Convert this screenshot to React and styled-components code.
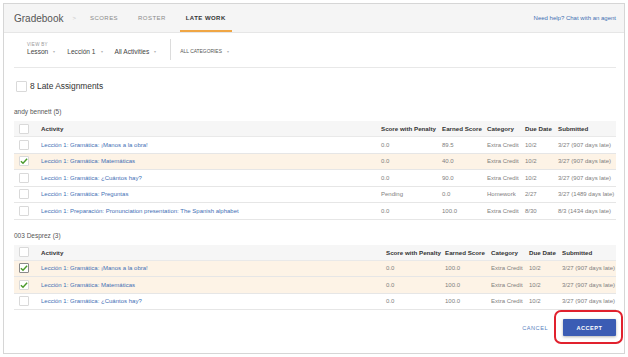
import styled, { createGlobalStyle } from "styled-components";

const GlobalStyle = createGlobalStyle`
  html, body {
    margin: 0;
    padding: 0;
    background: #ffffff;
  }
  body {
    font-family: "Liberation Sans", Arial, sans-serif;
    color: #333;
  }
  * {
    box-sizing: border-box;
  }
`;

const groups = [
  {
    name: "andy bennett (5)",
    columns: "21px 340px 61px 45px 38px 33px 64px",
    rows: [
      { activity: "Lección 1: Gramática: ¡Manos a la obra!", penalty: "0.0", earned: "89.5", category: "Extra Credit", due: "10/2", submitted: "3/27 (907 days late)" },
      { activity: "Lección 1: Gramática: Matemáticas", penalty: "0.0", earned: "40.0", category: "Extra Credit", due: "10/2", submitted: "3/27 (907 days late)", checked: true },
      { activity: "Lección 1: Gramática: ¿Cuántos hay?", penalty: "0.0", earned: "90.0", category: "Extra Credit", due: "10/2", submitted: "3/27 (907 days late)" },
      { activity: "Lección 1: Gramática: Preguntas", penalty: "Pending", earned: "0.0", category: "Homework", due: "2/27", submitted: "3/27 (1489 days late)" },
      { activity: "Lección 1: Preparación: Pronunciation presentation: The Spanish alphabet", penalty: "0.0", earned: "100.0", category: "Extra Credit", due: "8/30", submitted: "8/3 (1434 days late)" },
    ],
  },
  {
    name: "003 Desprez (3)",
    columns: "21px 345px 59px 46px 38px 33px 60px",
    rows: [
      { activity: "Lección 1: Gramática: ¡Manos a la obra!", penalty: "0.0", earned: "100.0", category: "Extra Credit", due: "10/2", submitted: "3/27 (907 days late)", checked: true, focused: true },
      { activity: "Lección 1: Gramática: Matemáticas", penalty: "0.0", earned: "100.0", category: "Extra Credit", due: "10/2", submitted: "3/27 (907 days late)", checked: true },
      { activity: "Lección 1: Gramática: ¿Cuántos hay?", penalty: "0.0", earned: "100.0", category: "Extra Credit", due: "10/2", submitted: "3/27 (907 days late)" },
    ],
  },
];

function Check({ checked, focused, size }) {
  return (
    <Box $focused={focused} $size={size}>
      {checked && (
        <svg width="9" height="8" viewBox="0 0 9 8">
          <path d="M1 4.2 L3.4 6.6 L8 1.4" fill="none" stroke="#4b9a2c" strokeWidth="1.6" />
        </svg>
      )}
    </Box>
  );
}

function Group({ group }) {
  return (
    <section>
      <GroupLabel>{group.name}</GroupLabel>
      <Table>
        <HeadRow $cols={group.columns}>
          <CheckCell><Check /></CheckCell>
          <HeadCell>Activity</HeadCell>
          <HeadCell>Score with Penalty</HeadCell>
          <HeadCell>Earned Score</HeadCell>
          <HeadCell>Category</HeadCell>
          <HeadCell>Due Date</HeadCell>
          <HeadCell>Submitted</HeadCell>
        </HeadRow>
        {group.rows.map((r, i) => (
          <Row key={i} $cols={group.columns} $selected={r.checked}>
            <CheckCell><Check checked={r.checked} focused={r.focused} /></CheckCell>
            <LinkCell>{r.activity}</LinkCell>
            <Cell>{r.penalty}</Cell>
            <Cell>{r.earned}</Cell>
            <Cell>{r.category}</Cell>
            <Cell>{r.due}</Cell>
            <Cell>{r.submitted}</Cell>
          </Row>
        ))}
      </Table>
    </section>
  );
}

export default function App() {
  return (
    <>
      <GlobalStyle />
      <Frame>
        <TopBar>
          <Brand>Gradebook</Brand>
          <Chevron>&gt;</Chevron>
          <Nav>
            <Tab>SCORES</Tab>
            <Tab>ROSTER</Tab>
            <Tab $active>LATE WORK</Tab>
          </Nav>
          <Help>Need help? Chat with an agent</Help>
        </TopBar>

        <Content>
          <Filters>
            <Filter>
              <FilterLabel>VIEW BY</FilterLabel>
              <FilterValue>Lesson<Caret>▾</Caret></FilterValue>
            </Filter>
            <Filter>
              <FilterValue>Lección 1<Caret>▾</Caret></FilterValue>
            </Filter>
            <Filter>
              <FilterValue>All Activities<Caret>▾</Caret></FilterValue>
            </Filter>
            <Divider />
            <Filter>
              <SmallValue>ALL CATEGORIES<Caret>▾</Caret></SmallValue>
            </Filter>
          </Filters>

          <TitleRow>
            <Check size={11} />
            <Title>8 Late Assignments</Title>
          </TitleRow>

          <Groups>
            {groups.map((g) => (
              <Group key={g.name} group={g} />
            ))}
          </Groups>

          <Footer>
            <CancelButton>CANCEL</CancelButton>
            <Highlight>
              <AcceptButton>ACCEPT</AcceptButton>
            </Highlight>
          </Footer>
        </Content>
      </Frame>
    </>
  );
}

const Frame = styled.div`
  margin: 3px;
  width: 622px;
  height: 351px;
  border: 1px solid #d6d6d6;
  background: #fff;
  overflow: hidden;
`;

const TopBar = styled.header`
  display: flex;
  align-items: stretch;
  height: 29px;
  padding: 0 8px 0 10px;
  background: #f5f5f5;
  border-bottom: 1px solid #e6e6e6;
`;

const Brand = styled.div`
  display: flex;
  align-items: center;
  font-size: 10px;
  color: #555;
`;

const Chevron = styled.span`
  display: flex;
  align-items: center;
  margin: 0 8px 0 9px;
  font-size: 6px;
  color: #c8c8c8;
`;

const Nav = styled.nav`
  display: flex;
  gap: 8px;
`;

const Tab = styled.div`
  display: flex;
  align-items: center;
  padding: 2px 6px 0;
  font-size: 6px;
  letter-spacing: 0.45px;
  font-weight: ${({ $active }) => ($active ? 700 : 400)};
  color: ${({ $active }) => ($active ? "#333" : "#8a8a8a")};
  border-bottom: 2px solid ${({ $active }) => ($active ? "#f0a645" : "transparent")};
`;

const Help = styled.a`
  margin-left: auto;
  display: flex;
  align-items: center;
  font-size: 6px;
  color: #3f6fb3;
`;

const Content = styled.div`
  padding: 0 8px 0 10px;
`;

const Filters = styled.div`
  display: flex;
  align-items: flex-end;
  height: 35px;
  padding: 6px 0 7px 13px;
  border-bottom: 1px solid #e8e8e8;
`;

const Filter = styled.div`
  display: flex;
  flex-direction: column;
  justify-content: flex-end;
  height: 21px;
  padding-bottom: 5px;
  margin-right: 12px;
`;

const FilterLabel = styled.div`
  font-size: 4.5px;
  letter-spacing: 0.3px;
  color: #999;
  margin-bottom: 1px;
`;

const FilterValue = styled.div`
  display: flex;
  align-items: center;
  font-size: 6.6px;
  color: #444;
`;

const SmallValue = styled(FilterValue)`
  font-size: 4.9px;
  color: #555;
  padding-bottom: 1px;
`;

const Caret = styled.span`
  margin-left: 5px;
  font-size: 4px;
  color: #b5b5b5;
`;

const Divider = styled.div`
  width: 1px;
  height: 21px;
  background: #dcdcdc;
  margin: 0 9px 0 2px;
`;

const TitleRow = styled.div`
  display: flex;
  align-items: center;
  gap: 3px;
  height: 12px;
  margin: 12px 0 0 2px;
`;

const Title = styled.div`
  font-size: 8.4px;
  color: #333;
`;

const Groups = styled.div`
  display: flex;
  flex-direction: column;
  gap: 12px;
  margin-top: 16px;
`;

const GroupLabel = styled.div`
  height: 8px;
  line-height: 8px;
  font-size: 6.5px;
  color: #555;
  margin-bottom: 5px;
`;

const Table = styled.div`
  display: flex;
  flex-direction: column;
`;

const Row = styled.div`
  display: grid;
  grid-template-columns: ${({ $cols }) => $cols};
  align-items: center;
  height: 16.5px;
  border-bottom: 1px solid #e6e6e6;
  background: ${({ $selected }) => ($selected ? "#fdf3e6" : "#fff")};
`;

const HeadRow = styled(Row)`
  height: 16px;
  background: #f6f6f6;
  border-bottom: 1px solid #e9e9e9;
`;

const CheckCell = styled.div`
  display: flex;
  align-items: center;
  padding-left: 5px;
`;

const Cell = styled.div`
  padding-left: 6px;
  font-size: 6px;
  color: #808080;
  white-space: nowrap;
`;

const HeadCell = styled(Cell)`
  font-size: 6.2px;
  font-weight: 700;
  color: #333;
`;

const LinkCell = styled(Cell)`
  font-size: 6px;
  color: #3f6fb5;
`;

const Box = styled.span`
  display: inline-flex;
  align-items: center;
  justify-content: center;
  width: ${({ $size }) => $size || 10}px;
  height: ${({ $size }) => $size || 10}px;
  background: #fff;
  border: 1px solid ${({ $focused }) => ($focused ? "#8a8a8a" : "#d9d9d9")};
  border-radius: 1px;
`;

const Footer = styled.div`
  display: flex;
  justify-content: flex-end;
  align-items: center;
  gap: 15px;
  margin-top: 9px;
`;

const CancelButton = styled.button`
  border: none;
  background: none;
  padding: 0;
  font-family: "Liberation Sans", Arial, sans-serif;
  font-size: 5.6px;
  letter-spacing: 0.5px;
  color: #5a7fc0;
`;

const Highlight = styled.div`
  position: relative;

  &::after {
    content: "";
    position: absolute;
    top: -9px;
    right: -7px;
    bottom: -8px;
    left: -9px;
    border: 2px solid #e1212e;
    border-radius: 7px;
    pointer-events: none;
  }
`;

const AcceptButton = styled.button`
  display: block;
  width: 53px;
  height: 17px;
  border: none;
  border-radius: 1px;
  background: #3b5cb4;
  box-shadow: 0 1px 3px rgba(0, 0, 0, 0.3);
  color: #fff;
  font-family: "Liberation Sans", Arial, sans-serif;
  font-size: 5.6px;
  font-weight: 700;
  letter-spacing: 0.5px;
`;
